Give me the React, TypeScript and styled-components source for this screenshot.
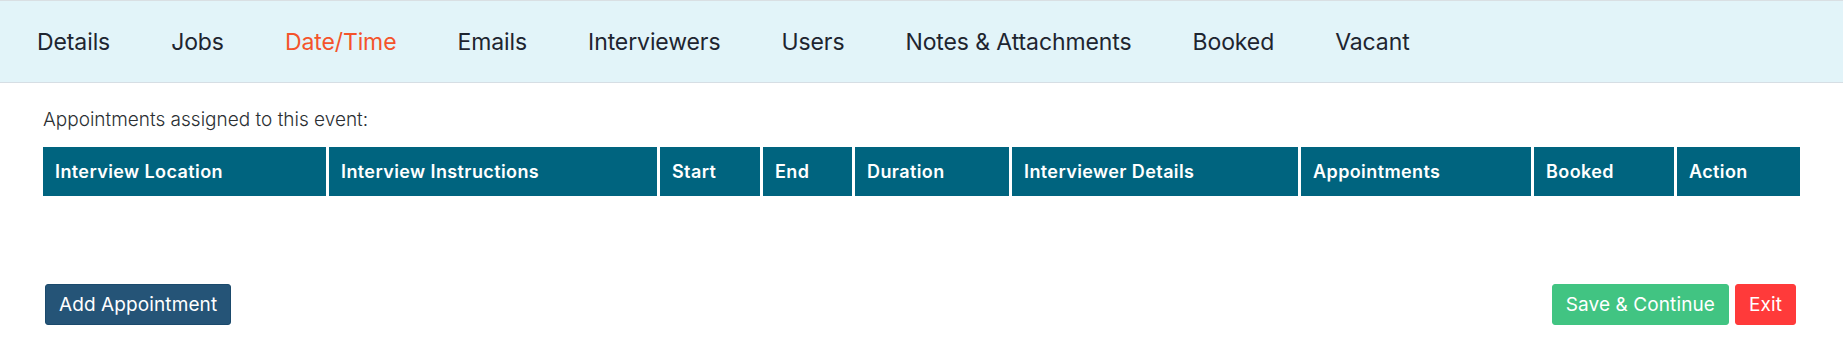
import styled, { createGlobalStyle } from "styled-components";

const GlobalStyle = createGlobalStyle`
  html, body {
    margin: 0;
    padding: 0;
    background: #ffffff;
    font-family: Inter, "Open Sans", "DejaVu Sans", sans-serif;
  }
`;

const tabs = [
  "Details",
  "Jobs",
  "Date/Time",
  "Emails",
  "Interviewers",
  "Users",
  "Notes & Attachments",
  "Booked",
  "Vacant",
];

const columns = [
  { title: "Interview Location", width: 283 },
  { title: "Interview Instructions", width: 328 },
  { title: "Start", width: 100 },
  { title: "End", width: 89 },
  { title: "Duration", width: 154 },
  { title: "Interviewer Details", width: 286 },
  { title: "Appointments", width: 230 },
  { title: "Booked", width: 140 },
  { title: "Action", width: 123 },
];

const WrapperStyled = styled.div`
  width: 1843px;
  height: 352px;
  background: #ffffff;
`;

const TabBarStyled = styled.nav`
  display: flex;
  align-items: center;
  gap: 61px;
  height: 81px;
  padding: 0 0 0 37px;
  background: #e2f4f9;
  border-top: 1px solid #d9dfe3;
  border-bottom: 1px solid #d6dee4;
`;

const TabStyled = styled.span<{ $active?: boolean }>`
  font-size: 23px;
  font-weight: 400;
  letter-spacing: -0.1px;
  color: ${(p) => (p.$active ? "#f4532b" : "#1e2530")};
  cursor: pointer;
  white-space: nowrap;
`;

const ContentStyled = styled.div`
  padding: 25px 43px 0;
`;

const CaptionStyled = styled.p`
  margin: 0;
  font-size: 19px;
  line-height: 24px;
  font-weight: 300;
  color: #2b2f33;
`;

const HeaderRowStyled = styled.div<{ $template: string }>`
  display: grid;
  grid-template-columns: ${(p) => p.$template};
  column-gap: 3px;
  margin-top: 15px;
`;

const HeaderCellStyled = styled.div`
  display: flex;
  align-items: center;
  height: 49px;
  padding: 0 11px 0 12px;
  background: #00647f;
  color: #ffffff;
  font-size: 18px;
  font-weight: 600;
  letter-spacing: 0.4px;
  white-space: nowrap;
`;

const FooterStyled = styled.div`
  display: flex;
  justify-content: space-between;
  align-items: center;
  margin-top: 88px;
  padding: 0 4px 0 2px;
`;

const ButtonGroupStyled = styled.div`
  display: flex;
  gap: 6px;
`;

const variants = {
  primary: { bg: "#255477", border: "#1b4a6c" },
  success: { bg: "#41c482", border: "#41c482" },
  danger: { bg: "#ff3a3a", border: "#ff3a3a" },
};

const ButtonStyled = styled.button<{ $variant: keyof typeof variants }>`
  height: 41px;
  padding: 0 13px;
  border-radius: 3px;
  border: 1px solid ${(p) => variants[p.$variant].border};
  background: ${(p) => variants[p.$variant].bg};
  color: #ffffff;
  font-family: inherit;
  font-size: 19px;
  font-weight: 400;
  letter-spacing: 0.1px;
  cursor: pointer;
`;

export default function App() {
  const template = columns.map((c) => `${c.width}px`).join(" ");

  return (
    <WrapperStyled>
      <GlobalStyle />
      <TabBarStyled>
        {tabs.map((tab) => (
          <TabStyled key={tab} $active={tab === "Date/Time"}>
            {tab}
          </TabStyled>
        ))}
      </TabBarStyled>
      <ContentStyled>
        <CaptionStyled>Appointments assigned to this event:</CaptionStyled>
        <HeaderRowStyled $template={template}>
          {columns.map((col) => (
            <HeaderCellStyled key={col.title}>{col.title}</HeaderCellStyled>
          ))}
        </HeaderRowStyled>
        <FooterStyled>
          <ButtonStyled $variant="primary">Add Appointment</ButtonStyled>
          <ButtonGroupStyled>
            <ButtonStyled $variant="success">Save &amp; Continue</ButtonStyled>
            <ButtonStyled $variant="danger">Exit</ButtonStyled>
          </ButtonGroupStyled>
        </FooterStyled>
      </ContentStyled>
    </WrapperStyled>
  );
}
